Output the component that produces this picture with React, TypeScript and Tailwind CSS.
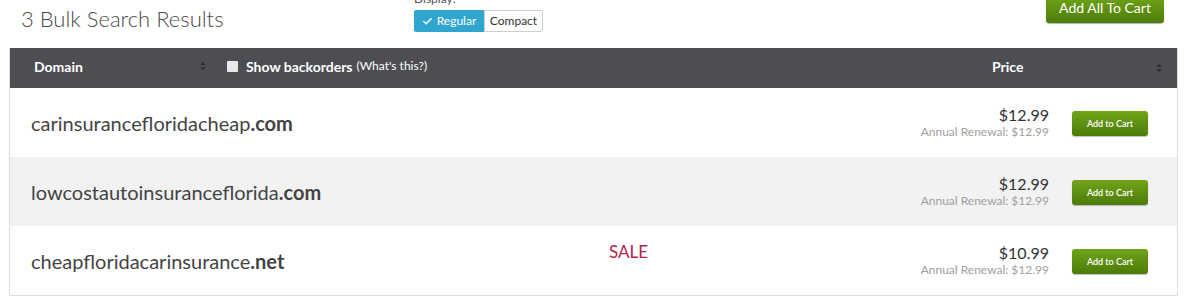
import { Check } from "lucide-react";

type Row = {
  name: string;
  tld: string;
  price: string;
  renewal: string;
  sale?: boolean;
};

const rows: Row[] = [
  { name: "carinsurancefloridacheap", tld: ".com", price: "$12.99", renewal: "$12.99" },
  { name: "lowcostautoinsuranceflorida", tld: ".com", price: "$12.99", renewal: "$12.99" },
  { name: "cheapfloridacarinsurance", tld: ".net", price: "$10.99", renewal: "$12.99", sale: true },
];

function SortIcon() {
  return (
    <svg width="6" height="10" viewBox="0 0 6 10" className="text-[#2f3033]">
      <path d="M3 0.5 L5.6 4 H0.4 Z" fill="currentColor" />
      <path d="M3 9.5 L5.6 6 H0.4 Z" fill="currentColor" />
    </svg>
  );
}

function AddToCart() {
  return (
    <button
      type="button"
      className="h-[25px] w-[76px] rounded-[3px] bg-gradient-to-b from-[#72a419] to-[#4b7b07] text-[9px] font-semibold text-white shadow-[0_1px_1px_rgba(0,0,0,0.25)]"
    >
      Add to Cart
    </button>
  );
}

export default function App() {
  return (
    <div className="h-[302px] w-[1198px] overflow-hidden bg-white font-['Lato','Noto_Sans',sans-serif] text-[#444]">
      {/* top bar */}
      <div className="flex h-[48px] items-start">
        <h1 className="ml-[21px] mt-[2px] w-[393px] text-[22px] font-light text-[#4a4a4a]">
          3 Bulk Search Results
        </h1>
        <div className="-mt-[8px] flex flex-col">
          <span className="text-[12px] leading-[14px] text-[#555]">Display:</span>
          <div className="mt-[4px] flex h-[22px] text-[12px]">
            <button
              type="button"
              className="flex w-[70px] items-center justify-center gap-[4px] rounded-l-[2px] bg-[#2fa5d0] text-white"
            >
              <Check size={11} strokeWidth={3.5} />
              Regular
            </button>
            <button
              type="button"
              className="w-[59px] rounded-r-[2px] border border-[#cfcfcf] bg-white text-[#333]"
            >
              Compact
            </button>
          </div>
        </div>
        <button
          type="button"
          className="ml-auto mr-[34px] -mt-[10px] h-[33px] w-[118px] rounded-b-[3px] bg-gradient-to-b from-[#78ad1b] to-[#4c7d07] pt-[2px] text-[14px] text-white shadow-[0_1px_1px_rgba(0,0,0,0.3)]"
        >
          Add All To Cart
        </button>
      </div>

      {/* table */}
      <div className="ml-[9px] w-[1169px] border-x border-b border-[#dcdcdc]">
        <div className="flex h-[40px] items-center bg-[#4d4e53] pb-[4px] text-[14px] font-bold text-white">
          <span className="ml-[24px] w-[166px]">Domain</span>
          <SortIcon />
          <span className="ml-[21px] h-[11px] w-[11px] rounded-[1px] bg-[#e9e9e9]" />
          <span className="ml-[8px]">Show backorders</span>
          <span className="ml-[4px] text-[12px] font-normal">(What's this?)</span>
          <span className="ml-auto w-[164px]">Price</span>
          <span className="mr-[15px] mt-[4px]">
            <SortIcon />
          </span>
        </div>
        {rows.map((r, i) => (
          <div
            key={r.name}
            className={`flex h-[69px] items-center ${i % 2 === 1 ? "bg-[#f2f2f2]" : "bg-white"} ${i === 2 ? "h-[68px]" : ""}`}
          >
            <span className="ml-[21px] w-[578px] text-[20px] text-[#444]">
              {r.name}
              <span className="font-bold">{r.tld}</span>
            </span>
            <span className="-mt-[18px] w-[200px] text-[17px] text-[#b3254c]">
              {r.sale ? "SALE" : ""}
            </span>
            <div className="ml-auto flex flex-col items-end">
              <span className="text-[16px] leading-[18px] text-[#333]">{r.price}</span>
              <span className="text-[12px] leading-[15px] text-[#a0a0a0]">
                Annual Renewal: {r.renewal}
              </span>
            </div>
            <div className="ml-[23px] mr-[29px]">
              <AddToCart />
            </div>
          </div>
        ))}
      </div>
    </div>
  );
}
